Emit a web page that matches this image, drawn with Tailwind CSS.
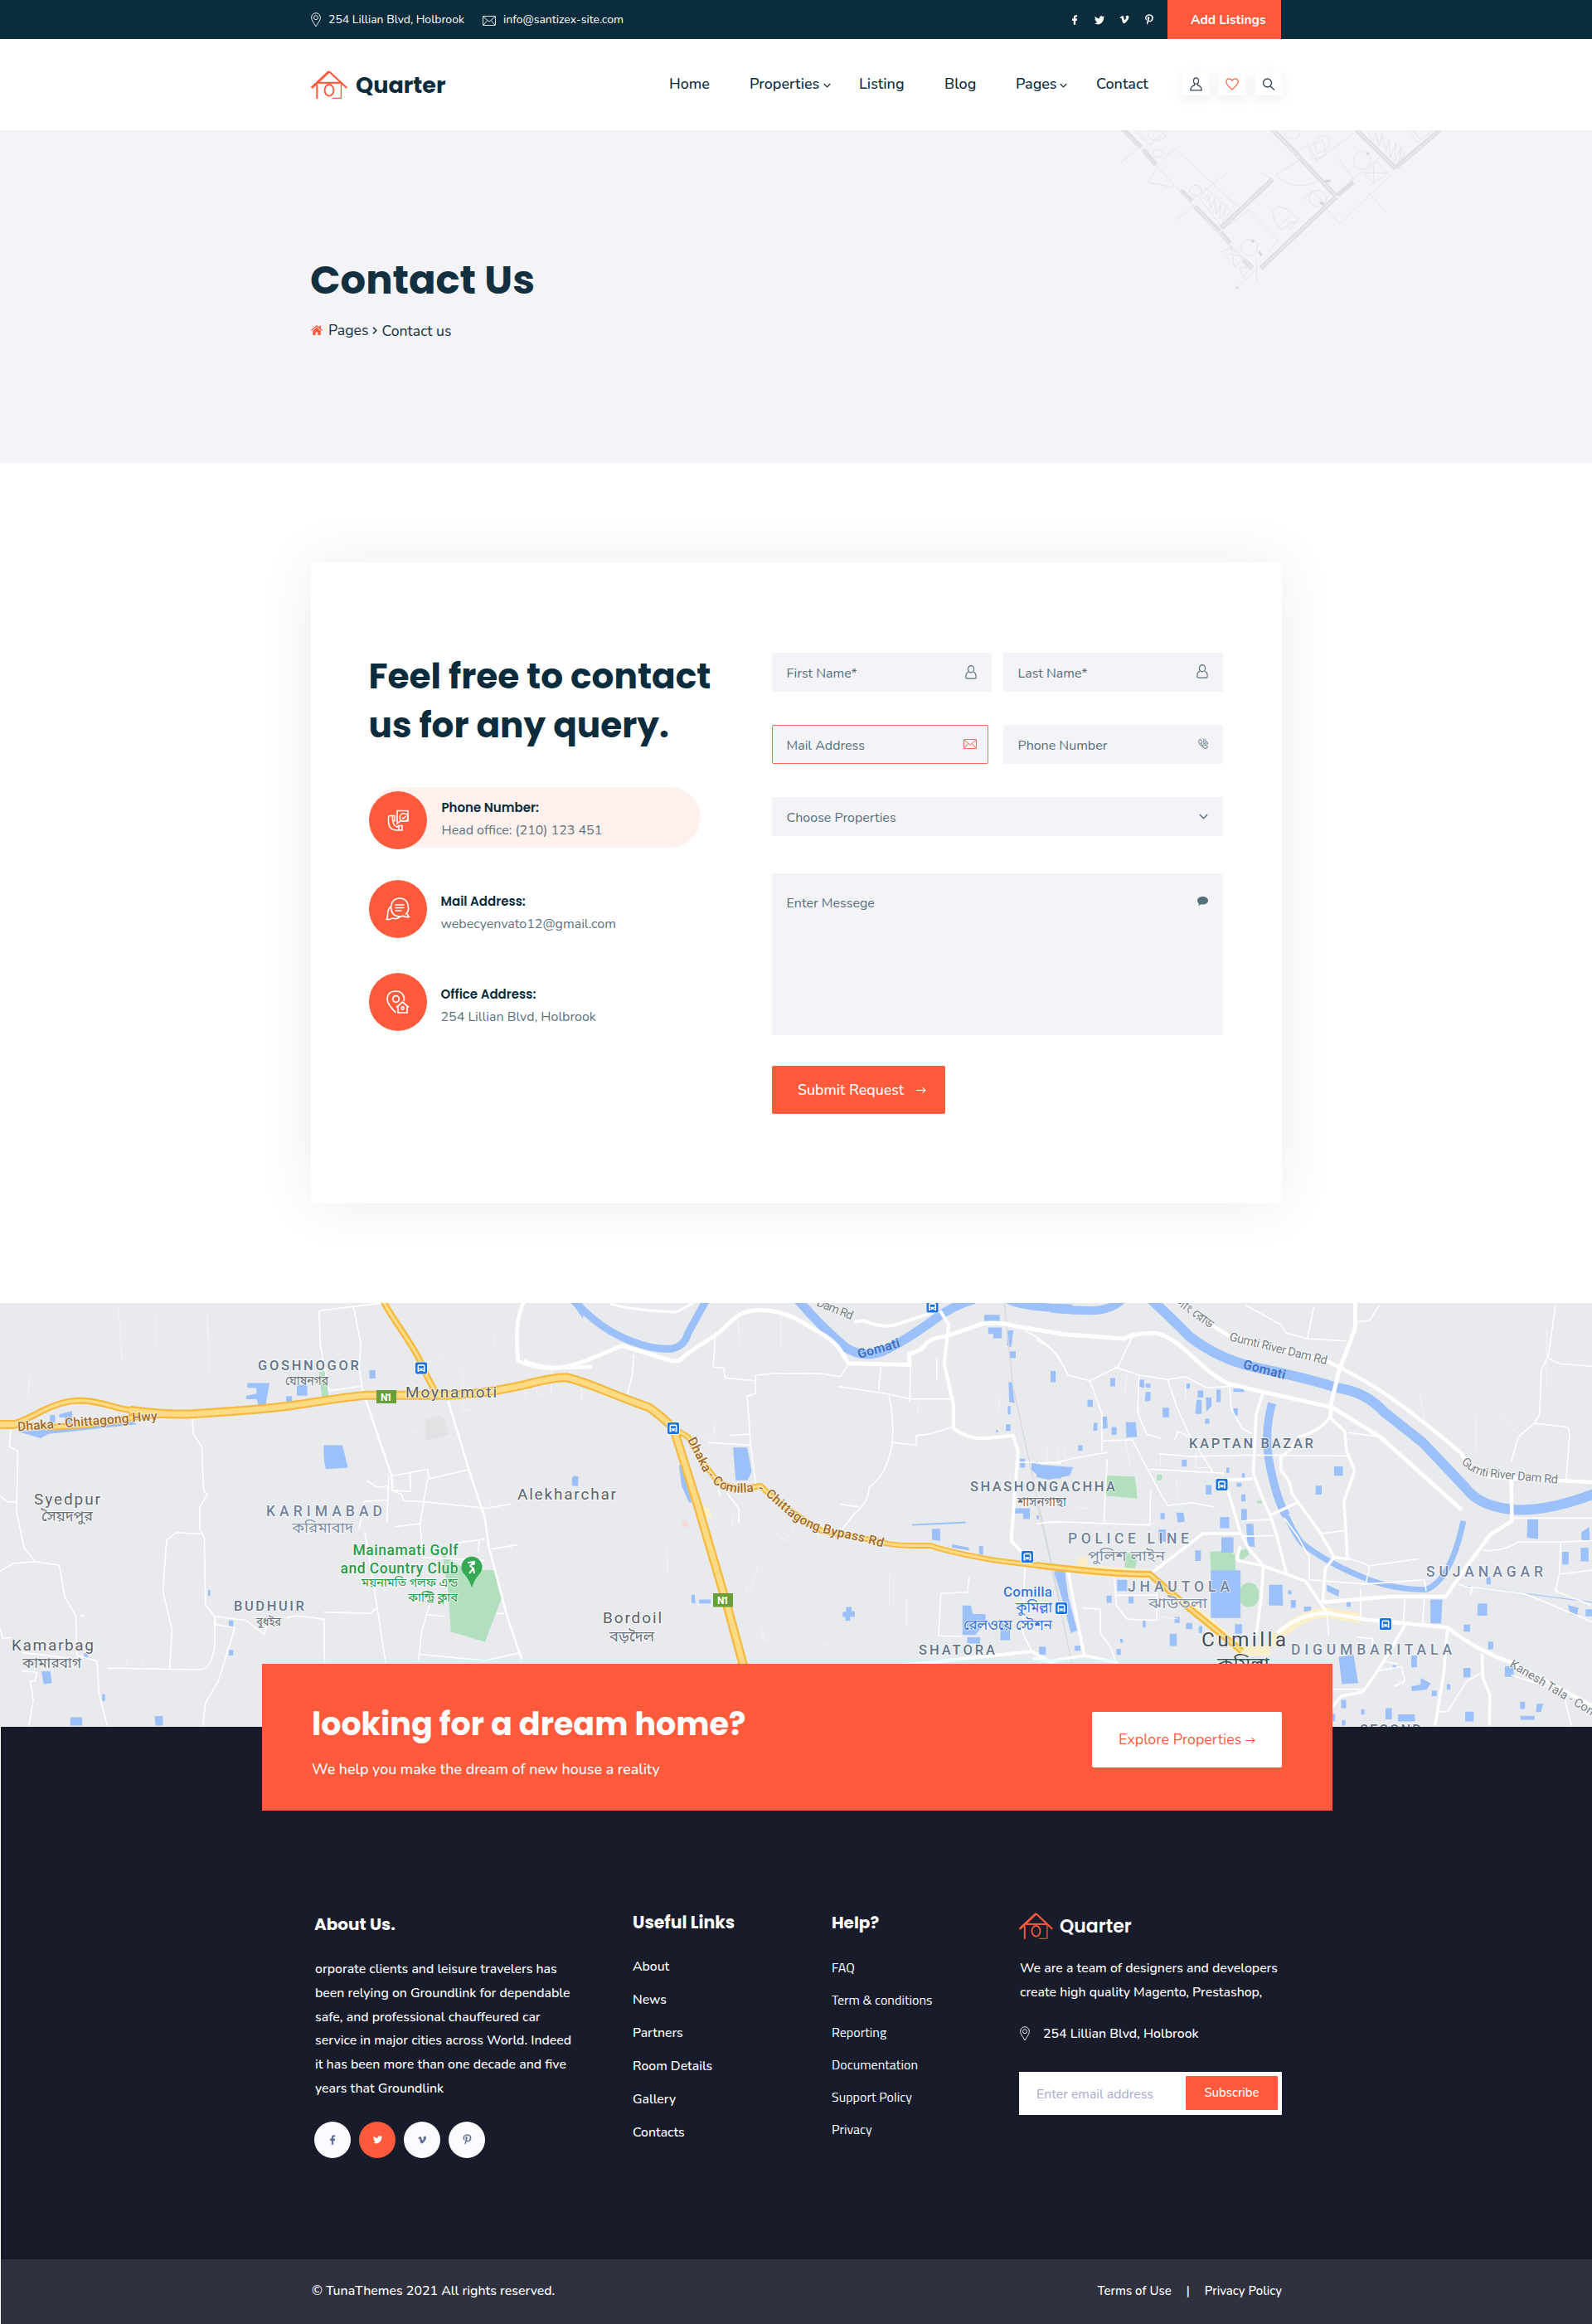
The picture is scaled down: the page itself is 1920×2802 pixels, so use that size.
<!DOCTYPE html>
<html lang="en">
<head>
<meta charset="utf-8">
<title>Quarter - Contact Us</title>
<script src="https://cdn.jsdelivr.net/npm/@tailwindcss/browser@4"></script>
</head>
<body class="w-[1920px] bg-white font-['Nunito','Noto_Sans',sans-serif] text-[#12303f] overflow-x-hidden">

<!-- Shared icons -->
<svg class="hidden">
  <symbol id="fb" viewBox="0 0 24 24"><path d="M14 13.5h2.5l1-4H14v-2c0-1.03 0-2 2-2h1.5V2.14c-.33-.04-1.56-.14-2.86-.14C11.93 2 10 3.66 10 6.7v2.8H7v4h3V22h4z"/></symbol>
  <symbol id="tw" viewBox="0 0 24 24"><path d="M22.46 6c-.77.35-1.6.58-2.46.69a4.3 4.3 0 0 0 1.88-2.38c-.83.5-1.75.85-2.72 1.05a4.28 4.28 0 0 0-7.3 3.91A12.13 12.13 0 0 1 3.06 4.79a4.28 4.28 0 0 0 1.33 5.71c-.71 0-1.37-.2-1.95-.5v.03a4.28 4.28 0 0 0 3.43 4.19 4.3 4.3 0 0 1-1.93.07 4.28 4.28 0 0 0 4 2.98A8.6 8.6 0 0 1 1.75 19.1a12.1 12.1 0 0 0 6.56 1.92c7.88 0 12.2-6.54 12.2-12.2l-.01-.56A8.7 8.7 0 0 0 22.46 6z"/></symbol>
  <symbol id="vm" viewBox="0 0 24 24"><path d="M22 7.42c-.09 1.95-1.45 4.62-4.08 8.02C15.2 19 12.9 20.76 11.02 20.76c-1.17 0-2.15-1.08-2.96-3.23l-1.61-5.93C5.85 9.45 5.2 8.37 4.52 8.37c-.15 0-.68.32-1.57.94L2 8.1C4.96 5.5 6.63 4 7.66 3.9c1.58-.15 2.55.93 2.91 3.24.67 4.24 1.1 6.04 2.06 6.04.62 0 1.55-.98 2.79-2.94 1.16-1.8 1.25-3.3.17-3.3-.4 0-.83.1-1.26.28.86-2.8 2.5-4.17 4.92-4.1 1.8.06 2.84 1.4 2.75 4.3z"/></symbol>
  <symbol id="pt" viewBox="0 0 384 512"><path d="M204 6.5C101.4 6.5 0 74.9 0 185.6 0 256 39.6 296 63.6 296c9.9 0 15.6-27.6 15.6-35.4 0-9.3-23.7-29.1-23.7-67.8 0-80.4 61.2-137.4 140.4-137.4 68.1 0 118.5 38.7 118.5 109.8 0 53.1-21.3 152.7-90.3 152.7-24.9 0-46.2-18-46.2-43.8 0-37.8 26.4-74.4 26.4-113.4 0-66.2-93.9-54.2-93.9 25.8 0 16.8 2.1 35.4 9.6 50.7-13.8 59.4-42 147.9-42 209.1 0 18.9 2.7 37.5 4.5 56.4 3.4 3.8 1.7 3.4 6.9 1.5 50.4-69 48.6-82.5 71.4-172.8 12.3 23.4 44.1 36 69.3 36 106.2 0 153.9-103.5 153.9-196.8C384 71.3 298.2 6.5 204 6.5z"/></symbol>
  <symbol id="house" viewBox="0 0 44 35"><g fill="none" stroke="#ff5a3c" stroke-width="1.9"><path d="M.8 22 22 2.200" stroke-width="3"/><path d="M22 2.200 43.200 22" stroke-width="2.200"/><path d="M9 15.800h27" stroke-width="2.200"/><path d="M7.300 18v17" stroke-width="2"/><path d="M36.400 16v18.400M26 34.400h10.400" stroke-width="1.300"/><ellipse cx="22" cy="24.800" rx="5.400" ry="6.800"/></g></symbol>
  <symbol id="pin" viewBox="0 0 12 18"><g fill="none" stroke="currentColor" stroke-width=".9"><path d="M6 17C3.5 12.5.6 9.500.6 6.100a5.400 5.400 0 0 1 10.800 0C11.400 9.500 8.500 12.500 6 17z"/><circle cx="6" cy="6.200" r="2.500"/></g></symbol>
  <symbol id="mail" viewBox="0 0 16 12"><g fill="none" stroke="currentColor" stroke-width=".9"><rect x=".5" y=".5" width="15" height="11" rx=".6"/><path d="M.8 1 8 7.200 15.200 1M1 11.200 5.800 5.500M15 11.200 10.200 5.500"/></g></symbol>
  <symbol id="user" viewBox="0 0 14 17"><g fill="none" stroke="currentColor" stroke-width="1.200"><ellipse cx="7" cy="4.800" rx="3.600" ry="4.100"/><path d="M4.200 8C1.800 8.800.8 10.500.8 14.200q0 2 1.600 2h9.200q1.600 0 1.600-2c0-3.700-1-5.400-3.400-6.200"/></g></symbol>
  <symbol id="bus" viewBox="-8 -8 16 16"><rect x="-8" y="-8" width="16" height="16" rx="2" fill="#fff" opacity=".7"/><rect x="-7" y="-7" width="14" height="14" rx="1.800" fill="#1a73e8"/><path d="M-4.500 4.500V-2.500q0-2 2-2h5q2 0 2 2v7h-2v-1.300h-5v1.300z" fill="#fff"/><path d="M-3-2.700h6v3h-6zM-3 1.300h1.500v1.200h-1.500zM1.500 1.300h1.500v1.200h-1.500z" fill="#1a73e8"/></symbol>
  <symbol id="arrow" viewBox="0 0 12 8"><path d="M0 4h11M7.500.8 11 4 7.500 7.200" fill="none" stroke="currentColor" stroke-width="1.100"/></symbol>
  <symbol id="chev" viewBox="0 0 10 6"><path d="M.8.800 5 5 9.200.800" fill="none" stroke="currentColor" stroke-width="1.300"/></symbol>
</svg>

<!-- Top bar -->
<div class="h-[47px] bg-[#0b2c3d] text-white">
  <div class="ml-[375px] w-[1170px] h-full flex items-center text-[14px]">
    <svg class="w-3 h-[18px]"><use href="#pin"/></svg>
    <span class="ml-[9px] w-[186px]">254 Lillian Blvd, Holbrook</span>
    <svg class="w-4 h-3 mt-[2px]"><use href="#mail"/></svg>
    <span class="ml-[9px]">info@santizex-site.com</span>
    <div class="ml-auto flex items-center gap-[16px] mr-[15px] fill-white">
      <svg class="w-[14px] h-[14px]"><use href="#fb"/></svg>
      <svg class="w-[14px] h-[14px]"><use href="#tw"/></svg>
      <svg class="w-[14px] h-[13px]"><use href="#vm"/></svg>
      <svg class="w-[14px] h-[13px]"><use href="#pt"/></svg>
    </div>
    <a class="h-full w-[137px] bg-[#ff5a3c] flex items-center pl-7 text-[15.5px] font-bold">Add Listings</a>
  </div>
</div>

<!-- Main navigation -->
<header class="h-[110px] bg-white">
  <div class="ml-[375px] w-[1171px] h-[108px] flex items-center">
    <a class="flex items-center w-[433px]">
      <svg class="w-[44px] h-[35px]"><use href="#house"/></svg>
      <span class="ml-[10px] pt-1 font-['Poppins'] font-bold text-[27px] leading-[36px] text-[#0b2c3d]">Quarter</span>
    </a>
    <nav class="flex text-[18px] font-medium leading-6 text-[#0b2c3d]">
      <a class="w-[97px]">Home</a>
      <a class="w-[132px] flex items-center">Properties<svg class="ml-[5px] mt-[3px] w-[9px] h-[6px]"><use href="#chev"/></svg></a>
      <a class="w-[103px]">Listing</a>
      <a class="w-[86px]">Blog</a>
      <a class="w-[97px] flex items-center">Pages<svg class="ml-[3px] mt-[3px] w-[9px] h-[6px]"><use href="#chev"/></svg></a>
      <a class="w-[104px]">Contact</a>
    </nav>
    <div class="flex gap-3 text-[#3c4a55]">
      <span class="w-8 h-7 flex items-center justify-center shadow-[0_4px_16px_rgba(30,40,80,0.08)]"><svg class="w-[15px] h-[17px]" viewBox="0 0 15 17" fill="none" stroke="currentColor" stroke-width="1.200"><ellipse cx="7.500" cy="4.600" rx="3" ry="3.700"/><path d="M5.500 8v1.800C2.500 10.500 1 12 .8 15.800h13.400C14 12 12.500 10.500 9.500 9.800V8"/></svg></span>
      <span class="w-8 h-7 flex items-center justify-center text-[#ff5a3c] shadow-[0_4px_16px_rgba(30,40,80,0.08)]"><svg class="w-[16px] h-[15px]" viewBox="0 0 16 15" fill="none" stroke="currentColor" stroke-width="1.200"><path d="M8 14C4 10.500.8 7.800.8 4.800.8 2.500 2.400.8 4.400.8 6 .8 7.300 1.700 8 3.200 8.700 1.700 10 .8 11.600.8c2 0 3.600 1.700 3.600 4C15.200 7.800 12 10.500 8 14z"/></svg></span>
      <span class="w-8 h-7 flex items-center justify-center shadow-[0_4px_16px_rgba(30,40,80,0.08)]"><svg class="w-[16px] h-[15px]" viewBox="0 0 16 15" fill="none" stroke="currentColor" stroke-width="1.400"><circle cx="6.500" cy="6" r="5"/><path d="M10 9.800 15 14.400"/></svg></span>
    </div>
  </div>
</header>

<!-- Page title -->
<section class="relative h-[401px] bg-[#f3f3f8] pl-[374px] pt-[150px]">
  <svg class="absolute top-0 left-[1300px] w-[500px] h-[222px]" viewBox="0 51 1500 666" fill="none" stroke="#e4e4ea" stroke-width="3">
    <g stroke="#dfdfe5" stroke-width="17">
      <path d="M160 45 228 112M236 122 282 176M372 268 412 308M422 326 512 416M516 420 550 460M600 520 632 550"/>
      <path d="M518 405 705 228M700 45 800 145M800 148 935 290M1008 50 1150 190M1150 186 1310 50M662 550 850 372 935 292M940 286 996 238"/>
    </g>
    <g stroke="#f3f3f8" stroke-width="3">
      <path d="M160 45 632 550M518 405 705 228M700 45 935 290M1008 50 1150 190 1310 50M662 550 935 292"/>
    </g>
    <path d="M160 45 600 520M205 50 262 104 322 50M152 172 218 116M255 240 290 180M255 240 345 258M300 160 352 118 575 325M540 206 400 310M350 380 415 325M525 410 625 335M610 335 725 450M725 450 690 490M545 470 605 520M520 492 560 470 600 510 570 545zM535 498 585 505M555 475 565 540M575 620 640 560M646 520V600M585 550 625 545 600 585z"/>
    <path d="M715 212 800 160M665 205 700 228M715 215Q790 275 865 235M790 130 830 105 870 165M1095 145 985 235M940 150 995 225M860 165 1000 60M1035 205 1080 165 1120 205 1070 245zM1040 205 1112 205M1070 180V240M900 335 945 390 1130 215M1050 275 1112 345M1195 50 1230 95 1285 50M1210 50 1240 85M810 305 850 270 905 330M925 290 885 250"/>
    <path d="M440 295 465 262 560 350 515 395zM450 300 470 285M465 310 475 290 480 335 495 300 500 355 515 320 515 370 535 335 525 380 548 350M1050 60 1070 90 1078 60 1090 110 1100 65 1115 130 1125 85 1130 150 1150 100 1145 165 1170 110 1160 175 1185 130"/>
    <path d="M845 105Q870 65 905 72Q920 105 890 145L850 155 838 125zM855 100 885 85 895 125 865 135z"/>
    <path d="M705 345Q720 315 760 340L800 375 735 410Q705 380 705 345zM740 385 765 365M760 380 790 385 765 410z"/>
    <ellipse cx="868" cy="298" rx="32" ry="30"/><ellipse cx="620" cy="475" rx="30" ry="30"/><circle cx="1028" cy="160" r="32"/><ellipse cx="425" cy="268" rx="22" ry="18"/><ellipse cx="285" cy="70" rx="32" ry="18"/><ellipse cx="775" cy="65" rx="28" ry="16"/><ellipse cx="290" cy="135" rx="18" ry="14"/>
    <path d="M655 490 665 505M628 455 638 450M895 235 915 235M1045 140 1052 132M875 312 890 320" stroke="#d6d6dc" stroke-width="9"/>
    <circle cx="575" cy="621" r="4" fill="#d6d6dc"/>
  </svg>
  <h1 class="pt-px font-['Poppins'] font-bold text-[48px] leading-[60px] text-[#12303f]">Contact Us</h1>
  <div class="mt-[15px] flex items-center text-[17.7px] leading-7">
    <svg class="w-[14px] h-[12px] ml-px" viewBox="0 0 14 12" fill="#ff5a3c"><path d="M7 0 0 6l.8.9L7 1.700l6.200 5.200.8-.9-2-1.700V.8h-1.800v2z"/><path d="M7 2.800 2.200 6.900V12h3.500V8.500h2.600V12h3.500V6.900z"/></svg>
    <span class="ml-[7px]">Pages</span>
    <svg class="ml-[5px] w-[6px] h-[9px]" viewBox="0 0 6 9"><path d="M1 .8 4.800 4.500 1 8.200" fill="none" stroke="currentColor" stroke-width="1.500"/></svg>
    <span class="ml-[5px] pt-[2px]">Contact us</span>
  </div>
</section>

<!-- Contact card -->
<section class="py-[120px]">
  <div class="ml-[374.5px] w-[1171px] h-[773px] bg-white flex shadow-[0_0_60px_rgba(60,60,130,0.09)]">
    <div class="w-[556.5px] pl-[71px] pt-[108px]">
      <h2 class="-ml-px font-['Poppins'] font-bold text-[42.2px] leading-[59px] text-[#0b2c3d] whitespace-nowrap">Feel free to contact<br>us for any query.</h2>
      <div class="mt-[45px] -ml-px w-[400px] h-[73px] rounded-full bg-[#fff1ed] flex">
        <span class="mt-[5px] w-[70px] h-[70px] shrink-0 rounded-full bg-[#ff5a3c] flex items-center justify-center"><svg class="w-[26px] h-[26px]" viewBox="0 0 26 26" fill="none" stroke="#fff" stroke-width="1.500"><path d="M1.500 9V15Q2 25 12 25h6v-5.500h-4.500l-1 1.500Q7.500 20 7 14.500L9 13.500V7.500H4.500Q1.500 7.500 1.500 9z"/><path d="M6.500 7.500v6.500M14 19.500V25M12 14V1.500h13V14h-9.500L12 17z"/><circle cx="20" cy="9.500" r="4.800"/><path d="M18 9.500l1.500 1.500 3-3"/></svg></span>
        <div class="ml-[18px] mt-[13px]"><p class="font-['Poppins'] font-semibold text-[15px] leading-6 text-[#0b2c3d]">Phone Number:</p><p class="pt-px text-[16px] leading-[29px] text-[#5c727d]">Head office: (210) 123 451</p></div>
      </div>
      <div class="mt-[39px] -ml-px h-[70px] flex">
        <span class="w-[70px] h-[70px] shrink-0 rounded-full bg-[#ff5a3c] flex items-center justify-center"><svg class="w-[30px] h-[28px]" viewBox="0 0 30 28" fill="none" stroke="#fff" stroke-width="1.600" stroke-linejoin="round"><path d="M24 20.500q4-3 3.500-8.500Q26.500 1 17 1T6.500 12q.5 11 10.500 11 2.500 0 4-.8 3.500 2 7.500 1.300-2-1-2-3.500"/><path d="M6.500 11Q2.500 14 2.500 20.500 2.500 25 1 26.500q5 .5 7.500-1.500 5 2 9-1.800M11.500 9h11M11.500 12.500h11M11.500 16h8"/></svg></span>
        <div class="ml-[17px] mt-[14px]"><p class="font-['Poppins'] font-semibold text-[15px] leading-6 text-[#0b2c3d]">Mail Address:</p><p class="pt-px text-[16px] leading-[29px] text-[#5c727d]">webecyenvato12@gmail.com</p></div>
      </div>
      <div class="mt-[42px] -ml-px h-[70px] flex">
        <span class="w-[70px] h-[70px] shrink-0 rounded-full bg-[#ff5a3c] flex items-center justify-center"><svg class="w-[28px] h-[28px]" viewBox="0 0 28 28" fill="none" stroke="#fff" stroke-width="1.700"><path d="M11.500 27Q1 17 1 10.500 1.500 1 11 1t10.500 9l-.5 3"/><circle cx="11.500" cy="10.500" r="3.800"/><path d="M12 20.500 19.500 14l7.500 6.500M14 19.500v7.500h11v-7.500"/><circle cx="19.500" cy="21.500" r="1.600"/></svg></span>
        <div class="ml-[17px] mt-[14px]"><p class="font-['Poppins'] font-semibold text-[15px] leading-6 text-[#0b2c3d]">Office Address:</p><p class="pt-px text-[16px] leading-[29px] text-[#5c727d]">254 Lillian Blvd, Holbrook</p></div>
      </div>
    </div>
    <form class="w-[544px] pt-[109px] text-[16px] text-[#56707b]">
      <div class="flex justify-between">
        <div class="w-[265px] h-[47px] bg-[#f3f3f8] flex items-center justify-between pl-[17.500px] pr-[18px] pt-[3px]">First Name*<svg class="w-[14px] h-[17px] -mt-1"><use href="#user"/></svg></div>
        <div class="w-[265px] h-[47px] bg-[#f3f3f8] flex items-center justify-between pl-[17.500px] pr-[18px] pt-[3px]">Last Name*<svg class="w-[14px] h-[17px] -mt-[5px]"><use href="#user"/></svg></div>
      </div>
      <div class="mt-10 flex justify-between">
        <div class="w-[261px] h-[47px] bg-[#f3f3f8] border border-[#ff6a50] rounded-[2px] flex items-center justify-between pl-[16.500px] pr-[13px] pt-[2px]">Mail Address<svg class="w-4 h-3 -mt-[3px] text-[#ff5a3c]"><use href="#mail"/></svg></div>
        <div class="w-[265px] h-[47px] bg-[#f3f3f8] flex items-center justify-between pl-[17.500px] pr-[18px] pt-[3px]">Phone Number<svg class="w-[12px] h-[12px] -mt-1" viewBox="0 0 24 24" fill="none" stroke="currentColor" stroke-width="2"><path d="M2 3 6 1l4 6-3 3q2 5 7 7l3-3 6 4-2 4q-3 2-8-1Q3 15 1 7 1 4 2 3zM12 1q10 1 11 12M12 5q6 1 7 8M12 9q3 1 3 4"/></svg></div>
      </div>
      <div class="mt-10 h-[47px] bg-[#f3f3f8] flex items-center justify-between pl-[17.500px] pr-[18px] pt-[2px]">Choose Properties<svg class="w-[11px] h-[7px] -mt-[2px]"><use href="#chev"/></svg></div>
      <div class="mt-[45px] h-[195px] bg-[#f3f3f8] flex items-start justify-between pl-[17.500px] pr-[18px] pt-6 leading-6">Enter Messege<svg class="w-[13px] h-[11px] mt-[4px]" viewBox="0 0 13 11" fill="currentColor"><path d="M6.500 0C10 0 13 2 13 4.800S10 9.600 6.500 9.600q-1.300 0-2.300-.3Q3 10.600 1 11q.9-1.200.9-2.600Q0 7 0 4.800C0 2 3 0 6.500 0z"/></svg></div>
      <button type="button" class="mt-[37px] w-[209px] h-[58px] rounded-[2px] bg-[#ff5a3c] text-white text-[17.800px] font-medium flex items-center pl-[31px]">Submit Request<svg class="ml-[15px] w-[12px] h-[9px]"><use href="#arrow"/></svg></button>
    </form>
  </div>
</section>

<!-- Map -->
<section class="h-[511px] bg-[#e8eaed]">
<svg class="block w-[1920px] h-[511px]" viewBox="0 1571 1920 511" stroke-linejoin="round">
  <!-- Western sheet -->
  <g transform="translate(0 1560) scale(.44643 .33801)">
    <path fill="#b2dfbe" d="M1195 930 1260 985 1335 985 1355 1085 1310 1242 1218 1205 1210 1050zM862 280 878 275 888 370 870 375z"/>
    <path fill="#e0e2e4" d="M1148 450 1185 435 1200 445 1212 500 1150 525z"/>
    <path fill="#9cc0f9" d="M875 540h50l15 80-60 5q-8-40-5-85zM668 318h60l-10 78-20 0-5-20-28 0 0-12 28-8 0-20-25-2zM802 325h28v38h-28zM773 365h16v22h-16zM998 272h16v30h-16zM1545 33h30v55zM50 492 360 455 370 465 130 500 110 515zM135 432h14v28h-14zM160 430l35-12 0 40h-20l0-18h-15zM1548 650h14v35h-16zM112 1346h24l4 42-22 4zM190 1510h32v30h-32zM418 1506h22v34h-20zM562 1056h6v22h-6zM618 1165h12v22h-12zM618 1270h12v20h-12zM227 1282h10v20h-10zM276 1428h8v24h-8zM1203 365h10v35z"/>
    <g fill="none" stroke="#fff">
      <g stroke-width="1.600">
        <path vector-effect="non-scaling-stroke" d="M30 475 25 545 48 560 45 780 65 905 95 955 160 968 175 1080 205 1150 208 1290 262 1310 268 1430 290 1540M95 955 35 962 0 990M0 720 20 742 45 742M520 440 522 500 545 545 550 700 560 715 540 760 540 840 552 870 555 1110 580 1150 583 1180 635 1190M545 855 475 852 450 880 440 1060 465 1200 458 1340M580 1150 580 1260Q570 1340 540 1340L290 1335M635 1190 590 1380 555 1460 548 1540M583 1150 665 1165 715 1215 720 1180M775 1155 800 1148 875 1160 877 1318M60 1345 100 1350 95 1380 82 1380 90 1450 78 1540M0 1190 8 1230 30 1225M60 1280 130 1290 180 1300"/>
        <path vector-effect="non-scaling-stroke" d="M862 60 865 180 885 320 890 345 975 330M862 60 955 45 1035 33M955 45 975 180 970 260 980 350M1058 650 1155 625 1160 660 1270 625M1155 660 1145 740 1135 820 1142 920M1108 640 1110 705 1060 700M1090 738 1150 742 1310 765 1380 750M1050 650 1045 820M970 840 985 740 1050 735M990 665 1020 690 1048 685M1058 700 1085 715 1090 738M1068 830 1135 820M985 850 990 880 1025 1170 1042 1318M1020 1118 1000 1140 875 1135M1140 940 1310 950M1225 890 1310 875M1295 880 1292 920M1328 910 1400 895M1160 1110 1140 1200 1130 1310M1130 1285 1310 1308 1405 1280M1155 1145 1200 1150M215 1150 228 1146M1340 1140 1362 1140"/>
      </g>
      <path stroke-width="2.600" vector-effect="non-scaling-stroke" d="M985 365 1058 650 1060 700M1210 380 1270 640 1310 800 1320 900 1370 1150 1410 1305"/>
      <path stroke-width="4.500" vector-effect="non-scaling-stroke" d="M1415 30C1390 90 1395 180 1400 240Q1440 262 1480 265L1600 260"/>
      <path stroke-width="1" stroke="#f3f4f6" vector-effect="non-scaling-stroke" d="M1250 270 1250 420 1275 410M1215 170 1225 185M1420 330v60M1450 320v40h15M1490 310v40M1190 230 1205 215M1330 140 1340 190M1110 490 1130 500M345 1300 338 1330M385 1310v20M1325 740v30M1380 895v20M320 40 330 250M560 60 565 280M420 80v100M80 280 75 380"/>
    </g>
    <g fill="none">
      <g stroke="#f6b940">
        <path stroke-width="11" vector-effect="non-scaling-stroke" d="M0 466H40M350 415C420 428 470 432 520 428 620 420 700 412 780 400 860 385 920 370 985 362H1180C1260 362 1320 352 1380 335L1436 319"/>
        <path stroke-width="8" vector-effect="non-scaling-stroke" d="M30 466Q70 450 110 420C150 395 180 380 220 380 290 385 300 410 370 418M40 468 150 475Q280 465 360 440L450 430M1035 25C1060 90 1110 170 1135 240 1150 290 1165 320 1180 360"/>
      </g>
      <g stroke="#fddb85">
        <path stroke-width="6.500" vector-effect="non-scaling-stroke" d="M0 466H40M350 415C420 428 470 432 520 428 620 420 700 412 780 400 860 385 920 370 985 362H1180C1260 362 1320 352 1380 335L1436 319"/>
        <path stroke-width="3.500" vector-effect="non-scaling-stroke" d="M30 466Q70 450 110 420C150 395 180 380 220 380 290 385 300 410 370 418M40 468 150 475Q280 465 360 440L450 430M1035 25C1060 90 1110 170 1135 240 1150 290 1165 320 1180 360"/>
      </g>
    </g>
  </g>
  <!-- Central sheet -->
  <g transform="translate(640 1560) scale(.40816 .33801)">
    <g fill="none" stroke="#9cc0f9" stroke-width="10">
      <path stroke-width="9" vector-effect="non-scaling-stroke" d="M120 15Q200 120 280 160 360 202 420 195 455 185 465 140L522 15"/>
      <path stroke-width="11" vector-effect="non-scaling-stroke" d="M785 15Q860 120 930 190 980 232 1040 205 1110 165 1200 85 1250 40 1310 20"/>
      <path vector-effect="non-scaling-stroke" d="M1410 20Q1460 50 1600 52"/>
    </g>
    <path fill="#9cc0f9" d="M598 548h42l13 85-12 32-35 0zM122 655l18-4-4 34-14-2zM1340 75h46v25h-46zM1352 120h40v38h-25v-15h-15zM1408 130h18l-6 60-12-5zM1415 205h18v24h-18zM1412 315h10l8 75-16-5zM1410 400h8v30h-8zM1404 465h14v24h-14zM1375 485h6v8h-6zM1537 275h14v40h-14zM1186 838h24v44l-24-5zM1125 822 1285 812v6L1128 827zM1245 893 1295 905v10L1245 905zM1325 900h12v30h-12zM475 1073h10l2 32-12-2zM498 1090h34v14h-34zM932 1117h16v15h10v20h-14v14h-14v-14h-8v-18h10zM1276 1112h25l5 30h38v30l-30 45h-38zM1290 1225h38v22h-38zM1388 1175h28v60h-28zM1445 588h16v32h-14zM1480 600l20 0 0 18 68 0 0 40-20 0-50-10-18-20zM1430 765l45 0 0 38-20 0 0-20-25 0zM1550 980h30v60l-30-30zM1502 1262h20v24h-20zM438 610h8l30 135-8 0-22-60zM1495 790h6v14h-6z"/>
    <path fill="#f9f0cc" d="M505 760l20 0 12 40-22 4z"/><path fill="#f8d8d8" d="M445 810h16l6 20-14 2z"/>
    <g fill="none" stroke="#d5d8db" stroke-width="1.200"><path vector-effect="non-scaling-stroke" d="M1400 33 1425 330 1568 1120"/></g>
    <g fill="none" stroke="#fff">
      <g stroke-width="5">
        <path vector-effect="non-scaling-stroke" d="M-20 240C60 280 110 265 180 230L270 185 420 240 440 238C480 190 530 165 560 135 600 90 610 60 680 58 760 60 800 100 870 150 920 190 920 220 940 248L1120 253 1118 215Q1160 200 1170 175 1190 155 1225 152L1340 105Q1390 100 1430 115L1570 143"/>
        <path stroke-width="4" vector-effect="non-scaling-stroke" d="M1210 60 1235 110 1222 250 1250 400 1250 480Q1290 520 1350 515L1425 505 1440 560 1420 880 1450 920M955 100 985 95Q1040 125 1080 110L1190 65M1100 1325 1370 1290 1480 1275 1545 1320"/>
        <path stroke-width="3" vector-effect="non-scaling-stroke" d="M235 35Q300 60 430 65L480 33"/>
      </g>
      <g stroke-width="1.600">
        <path vector-effect="non-scaling-stroke" d="M305 215 300 290 285 360M545 150 540 260 570 265 575 300 665 310M668 290Q730 280 860 285L915 295 940 250M665 290 665 355 640 365 650 540 665 680M910 330 1060 358 1120 375 1245 375M1035 260 1028 345M1122 255 1120 385M1058 358Q1075 450 1068 540 1050 650 1000 690 1000 740 960 780L920 840M1068 530 1140 540 1140 505 1180 500 1245 475M1200 230v75M915 750 970 760M525 530 650 540M590 505 645 500M580 710 615 765 615 820M555 700 560 720M1212 1068 1205 1220 1275 1222M1212 1068 1290 1065 1295 1010M1460 960 1455 1210 1480 1275M1460 130Q1540 180 1568 245M1440 600 1568 605M1520 815H1568"/>
      </g>
      <path stroke-width="1" stroke="#f5f6f8" vector-effect="non-scaling-stroke" d="M290 220 308 230M545 455 540 500 515 520M60 270v80M150 290v90M200 310 205 345M240 330v45M670 980 650 1050 632 1045 645 1065M680 1190 690 1240 715 1225M850 830v50M785 810 755 880 720 855M1385 365 1382 430M1145 385v40M595 790v30M860 1250h15M400 900 405 990M610 60 620 200M740 60v140M1060 1000v120M1110 1080v100"/>
    </g>
    <g fill="none">
      <g stroke="#f6b940">
        <path stroke-width="11" vector-effect="non-scaling-stroke" d="M-12 322C50 303 80 298 105 298 160 310 220 350 350 405Q390 440 422 479L490 740 580 1110 632 1340"/>
        <path stroke-width="7" vector-effect="non-scaling-stroke" d="M422 479 465 510Q500 590 540 650 580 710 680 685 740 760 860 845L1040 885Q1060 900 1180 898 1250 925 1370 950L1568 980"/>
      </g>
      <g stroke="#fddb85">
        <path stroke-width="6.500" vector-effect="non-scaling-stroke" d="M-12 322C50 303 80 298 105 298 160 310 220 350 350 405Q390 440 422 479L490 740 580 1110 632 1340"/>
        <path stroke-width="3" vector-effect="non-scaling-stroke" d="M422 479 465 510Q500 590 540 650 580 710 680 685 740 760 860 845L1040 885Q1060 900 1180 898 1250 925 1370 950L1568 980"/>
      </g>
    </g>
  </g>
  <!-- Eastern sheet -->
  <g transform="translate(1250 1560) scale(.4273 .33801)">
    <g fill="none" stroke="#9cc0f9">
      <path stroke-width="10" vector-effect="non-scaling-stroke" d="M40 52Q100 60 160 60 220 55 245 15"/>
      <path stroke-width="12" vector-effect="non-scaling-stroke" d="M320 15Q400 110 430 150 520 240 640 268 760 300 850 335 930 350 980 420L1090 530 1210 690Q1250 760 1350 770 1450 775 1580 710"/>
      <path stroke-width="10" vector-effect="non-scaling-stroke" d="M665 390Q640 500 660 620 680 740 705 790"/>
      <path stroke-width="7" vector-effect="non-scaling-stroke" d="M705 790Q725 850 750 890 820 960 920 1010 1000 1055 1100 1055 1170 1020 1205 810"/>
      <path stroke-width="1" vector-effect="non-scaling-stroke" d="M1200 1040 1568 1100"/>
    </g>
    <path fill="#b2dfbe" d="M195 648 278 652 285 730 193 720zM490 920 540 915 560 930 562 985 492 985zM575 915 595 910 600 930 580 950 570 935zM340 645h14v20h-14zM250 925h22l12 30-10 38h-25zM622 738h14v10h-14z"/>
    <rect x="573" y="1030" width="54" height="87" rx="26" ry="36" fill="#b2dfbe"/>
    <path fill="#9cc0f9" d="M492 986h84v170h-84zM656 1038h38l2 74h-40zM522 868h34v55h-34zM518 796h26v40h-26zM578 768h16v40h-16zM592 820h20l4 82-20-2zM578 715h12v25h-12zM252 458h28l4 52-30 2zM185 438h14l2 40-16 5zM212 475h14v28h-14zM162 460h10v28h-12zM356 406h18v34h-18zM144 378h15v25h-15zM208 300h14v30h-14zM40 275h14v38h-14zM308 350h14v30l-16 4zM288 306h16l0 30-16-6zM308 320h14v14h-14zM423 320h10v18h-10zM455 345h16v25h-16zM452 378h14l0 50-18 0zM478 370h16v30l-14 20zM476 445h12v18h-12zM508 342h12v44h-12zM556 408h12v28h-12zM556 338h30v12h-30zM410 592h14v24h-14zM478 682h16v34h-16zM536 620h8v18h-8zM580 640h8v16h-8zM118 540h12v20h-12zM395 780h20l4 32-20 4zM350 782h12v22h-12zM345 840h20v45l-20-5zM448 915h16v38h-16zM560 1178h20v34h-20zM376 1212h20v44h-20zM228 1020h28v40h-28zM198 1076h14v26h-14zM260 1080h14v24h-14zM300 1165h8v25h-8zM390 1152h14v22h-14zM422 1174h18v22h-18zM458 1185h10v24h-10zM226 1266h12v22h-12zM236 1230h8v14h-8zM840 615h25v34h-25zM788 684h17v32h-17zM820 1038l35 20-3 22-32-20zM718 1092h14v28h-14zM755 1115h20v18h-20zM875 1098h12v18h-12zM710 1058h10v14h-10zM1112 1090h34l-4 85h-30zM1246 1104h26v44h-28zM1386 804h30v70l-32-4zM1538 850l22-18 2 50-24-5zM1484 920h18v45h-18zM1536 906h22v48h-22zM1500 1110l30 10-4 30-20-8zM1550 1125h20v25h-20zM1206 1180h18v25h-18zM1275 1240h14v28h-14zM1270 1010h12v26h-12zM853 1295 895 1288 908 1388 862 1392zM1058 1290h16v42h-16zM1205 1334h20v34h-20zM1322 1328h25v38h-25zM1085 1370l28 20-12 22 0 0-42 5 0-18 25-5zM1158 1392h10v20h-10zM1116 1415h14v20h-14zM1005 1325h10v12h-10zM860 1448h14v30h-14zM985 1478h18v40h-18zM1020 1500h48v25h-48zM1210 1490h24v35h-24zM1365 1455h14v26h-14zM1412 1462h18l-6 30-14 0zM1366 1505h40v14h-40zM916 1482h10v18h-10zM862 1520h10v20h-10zM835 1498h8v26h-8zM50 992h30l10 90 25 118-18 10-22-110zM8 1258h18v28h-18zM108 1255h16v18h-16zM565 674h14v14h-14zM0 600l14 10 90 8-10 30-60 15-34-10z"/>
    <g fill="none" stroke="#fbf0ca" stroke-width="12"><path vector-effect="non-scaling-stroke" d="M660 1250Q740 1140 820 1136L915 1158M130 940 130 985 320 1000M420 1100 580 1275 660 1270"/></g>
    <path stroke="#d5d8db" stroke-width="1.200" fill="none" vector-effect="non-scaling-stroke" d="M0 740 30 900 100 1318"/>
    <g fill="none" stroke="#fff">
      <path stroke-width="5" vector-effect="non-scaling-stroke" d="M60 143 250 160Q270 140 340 140C420 170 450 260 540 320L640 350 835 405 970 510 1200 770M900 30V120Q880 190 855 270L830 400V440"/>
      <path stroke-width="4.500" vector-effect="non-scaling-stroke" d="M480 100 550 155Q700 200 820 240L860 265Q930 310 1000 370 1100 460 1200 570 1230 650 1300 655L1570 672M1340 660 1342 810 1280 860 1210 980 1155 1080 1000 1080 810 1100M680 1210Q740 1140 820 1138L930 1162 1160 1190Q1240 1270 1340 1315L1570 1470"/>
      <path stroke-width="3.500" vector-effect="non-scaling-stroke" d="M828 440Q800 490 740 510 720 560 690 580V630Q720 670 720 710L800 850 840 940 815 980 808 1100M828 440 870 490 875 560 898 630 868 740 878 945 840 940M640 350 620 430 612 640Q640 740 660 790L680 870 706 1000M540 700 575 850 600 910 640 970M565 950 640 970 760 1025 820 1138M320 1000 470 855H575M575 900 565 950M640 970 635 1080 620 1220M1040 1180Q960 1360 920 1420L860 1435 830 1480M1160 1190 1150 1350 1125 1540M1258 1285 1260 1370 1280 1430 1278 1540M90 990 105 1100 135 1290 230 1315M-10 1300 40 1310 135 1290M525 665 610 660M660 790 735 745"/>
      <path stroke-width="1.600" vector-effect="non-scaling-stroke" d="M270 155 230 260 150 310 90 290 60 220Q30 180 0 165M220 260 290 290 370 305 420 295 480 335 545 330M370 305 395 400 430 500 460 560 500 640M290 290 285 420 310 500 350 515M150 310 160 340 185 430 185 560M0 605 60 600 110 585 200 565M185 525 270 520 345 700 370 755 440 745 500 760M0 820 50 812 320 825 322 700M200 590 190 810M390 520 400 490 430 510M545 330 550 410 580 480 610 500M345 570 430 580 610 575 880 578M320 625 530 640M580 810 660 805M580 865 670 862M700 800 740 870 770 940 770 1020M590 40 690 110 705 140 765 160 875 168M783 45 765 160M968 40 940 95 905 100M1465 40 1445 220 1425 270 1420 430 1405 462 1360 510 1340 600M1405 462 1500 475 1505 500 1495 660M1445 230 1480 250 1568 258M880 495 970 510M800 855 870 845M1345 800H1568M1260 915Q1320 920 1360 885L1480 885 1568 880M1480 885 1475 1000 1568 985M1475 1000 1465 1060 1565 1110M1190 1035 1230 1050 1225 1075M1225 1045 1380 1070 1568 1170M880 945Q940 960 940 980L930 1030M940 970 1080 945M770 1020 930 1035 1095 1020 1100 1060M915 1050V1160M820 1140 825 1220M1040 1090 1035 1180M1095 1080 1090 1180M220 1010 225 1110 255 1160 340 1165M130 1120 180 1125 180 1210 210 1260 225 1318M225 1075H340M340 1020V1165M1258 1350 1215 1380 1160 1490 1130 1490M980 1310 1020 1320M960 1345 1030 1330 1040 1380 1010 1400M835 1410H920M1340 1360 1440 1400 1490 1440 1510 1540M945 1290 950 1230 905 1225"/>
      <path stroke-width="1" stroke="#f6f7f9" vector-effect="non-scaling-stroke" d="M255 290 250 350M290 400V440M310 510V480M450 560 450 620 500 620M60 550v40M30 545v50M80 555v35M110 760 140 765M350 570V610M420 300V370M400 740 395 660M250 520 265 620M1080 350 1100 480M1240 430V560M1440 120V330M1300 430 1360 500M760 950 740 920M300 820 340 820M850 1250 850 1290M1050 1400 1020 1380M400 1160 350 1150"/>
    </g>
    <g fill="none">
      <path stroke="#f6b940" stroke-width="8" vector-effect="non-scaling-stroke" d="M0 967Q200 1000 320 1000L430 1120 580 1275"/>
      <path stroke="#fddb85" stroke-width="3.200" vector-effect="non-scaling-stroke" d="M0 967Q200 1000 320 1000L430 1120 580 1275"/>
    </g>
  </g>

  <!-- Transit stops, route shields, landmark -->
  <g>
    <use href="#bus" x="500" y="1641.500" width="16" height="16"/><use href="#bus" x="804" y="1714" width="16" height="16"/><use href="#bus" x="1116.500" y="1567.500" width="16" height="16"/><use href="#bus" x="1231" y="1869" width="16" height="16"/><use href="#bus" x="1465.500" y="1782" width="16" height="16"/><use href="#bus" x="1272" y="1931" width="16" height="16"/><use href="#bus" x="1663" y="1950" width="16" height="16"/>
    <rect x="454" y="1676" width="24" height="16" fill="#689f38"/><rect x="860" y="1921" width="24" height="16.500" fill="#689f38"/>
    <path d="M569 1914Q565 1903 560 1898A12.500 12.500 0 1 1 578 1898Q573 1903 569 1914z" fill="#34a853"/>
    <g stroke="#fff" stroke-width="2" fill="none"><path d="M564 1884l8 -1-5 5 4 3-5 6M571 1891l1 6"/></g><circle cx="571" cy="1885" r="2" fill="#fff"/>
  </g>

  <!-- Labels -->
  <g font-family="Roboto, 'Noto Sans Bengali', sans-serif" font-weight="500" stroke="#fff" stroke-opacity=".7" stroke-width="2" paint-order="stroke" fill="#64768a">
    <g fill="#fff" font-size="12" font-weight="700" stroke="none"><text x="459" y="1688.500" textLength="14">N1</text><text x="865" y="1933.500" textLength="14">N1</text></g>
    <g font-size="16.500">
      <text x="311" y="1652" textLength="122">GOSHNOGOR</text>
      <text x="282" y="1942" textLength="85">BUDHUIR</text>
      <text x="1170" y="1798" textLength="175">SHASHONGACHHA</text>
      <text x="1108" y="1995" textLength="92">SHATORA</text>
      <text x="1434" y="1746" textLength="150">KAPTAN BAZAR</text>
      <text x="1640" y="2091" textLength="74">SECOND</text>
    </g>
    <g font-size="17.500" fill="#74849c">
      <text x="321" y="1828" textLength="140">KARIMABAD</text>
      <text x="1288" y="1861" textLength="146">POLICE LINE</text>
      <text x="1360" y="1919" textLength="123">JHAUTOLA</text>
      <text x="1557" y="1995" textLength="194">DIGUMBARITALA</text>
      <text x="1720" y="1901" textLength="141">SUJANAGAR</text>
    </g>
    <g font-size="19" font-weight="400" fill="#5b6268">
      <text x="489" y="1685" textLength="110">Moynamoti</text>
      <text x="41" y="1813.500" textLength="80">Syedpur</text>
      <text x="14" y="1990" textLength="99">Kamarbag</text>
      <text x="624" y="1808" textLength="119">Alekharchar</text>
      <text x="727" y="1957" textLength="71">Bordoil</text>
    </g>
    <g font-size="18" font-weight="400" fill="#6b7279">
      <text x="50" y="1834" textLength="62" lengthAdjust="spacingAndGlyphs">সৈয়দপুর</text>
      <text x="27" y="2011" textLength="71" lengthAdjust="spacingAndGlyphs">কামারবাগ</text>
      <text x="735" y="1979" textLength="54" lengthAdjust="spacingAndGlyphs">বড়দৈল</text>
      <text x="344" y="1670" font-size="16" textLength="52" lengthAdjust="spacingAndGlyphs">ঘোষনগর</text>
      <text x="309" y="1960" font-size="15" textLength="30" lengthAdjust="spacingAndGlyphs">বুধইর</text>
      <text x="1227" y="1816" font-size="16" textLength="59" lengthAdjust="spacingAndGlyphs">শাসনগাছা</text>
      <g fill="#8290a6">
        <text x="352" y="1848" textLength="74" lengthAdjust="spacingAndGlyphs">করিমাবাদ</text>
        <text x="1312" y="1882" textLength="93" lengthAdjust="spacingAndGlyphs">পুলিশ লাইন</text>
        <text x="1385" y="1939" textLength="71" lengthAdjust="spacingAndGlyphs">ঝাউতলা</text>
      </g>
    </g>
    <g fill="#2b9c4c" text-anchor="end" font-size="17.500">
      <text x="552.500" y="1874.500" textLength="127">Mainamati Golf</text>
      <text x="552.500" y="1896.500" textLength="142">and Country Club</text>
      <g font-size="15" font-weight="400"><text x="552" y="1912.500" textLength="116" lengthAdjust="spacingAndGlyphs">ময়নামতি গলফ এন্ড</text><text x="552" y="1930.500" textLength="60" lengthAdjust="spacingAndGlyphs">কান্ট্রি ক্লাব</text></g>
    </g>
    <g fill="#3474dc" font-size="17">
      <text x="1210" y="1925" textLength="59">Comilla</text>
      <text x="1225" y="1944" font-weight="400" textLength="44" lengthAdjust="spacingAndGlyphs">কুমিল্লা</text>
      <text x="1162" y="1965" font-weight="400" textLength="107" lengthAdjust="spacingAndGlyphs">রেলওয়ে স্টেশন</text>
    </g>
    <g fill="#474d54">
      <text x="1449" y="1985" font-size="24.500" font-weight="400" textLength="102">Cumilla</text>
      <text x="1468" y="2013" font-size="21" font-weight="400" textLength="63" lengthAdjust="spacingAndGlyphs">কুমিল্লা</text>
    </g>
    <g fill="#a0692b" font-size="15.500">
      <text transform="translate(21.500 1725.500) rotate(-4.500)" textLength="169">Dhaka - Chittagong Hwy</text>
      <path id="bypass" d="M829 1736 848 1774Q862 1793 875 1797 890 1802 911 1798 920 1798 930 1809L952 1828Q968 1840 983 1845L1008 1852 1040 1859 1070 1867" fill="none" stroke="none"/>
      <text><textPath href="#bypass" textLength="286">Dhaka - Comilla - Chittagong Bypass Rd</textPath></text>
    </g>
    <g fill="#3b6cbf" stroke="none" font-size="15.500">
      <text transform="translate(1036 1638) rotate(-16)" textLength="52">Gomati</text>
      <text transform="translate(1498.500 1649.500) rotate(15)" textLength="52">Gomati</text>
    </g>
    <g fill="#787e85" font-size="14.500" font-weight="400">
      <text transform="translate(984 1574) rotate(22)" textLength="46">Dam Rd</text>
      <text transform="translate(1482 1616) rotate(14)" textLength="121">Gumti River Dam Rd</text>
      <path id="dam" d="M1762 1763Q1776 1779 1797 1781L1848 1786 1890 1790" fill="none" stroke="none"/>
      <text><textPath href="#dam" textLength="122">Gumti River Dam Rd</textPath></text>
      <text transform="translate(1820 2009) rotate(31)">Kanesh Tala - Comilla</text>
      <text transform="translate(1418 1572) rotate(36)">গাং রোড</text>
    </g>
  </g>
</svg>
</section>

<!-- Footer -->
<footer class="flow-root ml-px h-[642px] bg-[#171b2a] text-white">
  <div class="relative -mt-[76px] ml-[315px] w-[1291px] h-[177px] bg-[#ff5a3c] flex justify-between pl-[60px] pr-[61px]">
    <div class="pt-[49px]">
      <h2 class="font-['Poppins'] font-bold text-[38px] leading-[48px]">looking for a dream home?</h2>
      <p class="mt-[16px] text-[17.850px] leading-7 font-medium">We help you make the dream of new house a reality</p>
    </div>
    <a class="mt-[58px] w-[229px] h-[67px] bg-white rounded-[2px] text-[#ff5a3c] text-[17.850px] flex items-center pl-8">Explore Properties<svg class="ml-[5px] mt-[2px] w-[12px] h-[9px]"><use href="#arrow"/></svg></a>
  </div>

  <div class="ml-[378px] flex">
    <div class="w-[384px] pt-[122px]">
      <h3 class="font-['Poppins'] font-bold text-[20px] leading-[30px]">About Us.</h3>
      <p class="mt-[25px] ml-px text-[15.9px] leading-[28.750px] font-medium whitespace-nowrap">orporate clients and leisure travelers has<br>been relying on Groundlink for dependable<br>safe, and professional chauffeured car<br>service in major cities across World. Indeed<br>it has been more than one decade and five<br>years that Groundlink</p>
      <div class="mt-[25px] flex gap-[10px] fill-[#5f6f8f]">
        <a class="w-11 h-11 rounded-full bg-[#fafaff] flex items-center justify-center"><svg class="w-[14px] h-[14px]"><use href="#fb"/></svg></a>
        <a class="w-11 h-11 rounded-full bg-[#ff5a3c] flex items-center justify-center fill-white"><svg class="w-[13px] h-[13px]"><use href="#tw"/></svg></a>
        <a class="w-11 h-11 rounded-full bg-[#fafaff] flex items-center justify-center"><svg class="w-[12px] h-[12px]"><use href="#vm"/></svg></a>
        <a class="w-11 h-11 rounded-full bg-[#fafaff] flex items-center justify-center"><svg class="w-[11px] h-[13px]"><use href="#pt"/></svg></a>
      </div>
    </div>
    <div class="w-[240px] pt-[120px]">
      <h3 class="font-['Poppins'] font-bold text-[20.400px] leading-[30px]">Useful Links</h3>
      <ul class="mt-[18px] text-[15.8px] leading-10 font-medium"><li>About</li><li>News</li><li>Partners</li><li>Room Details</li><li>Gallery</li><li>Contacts</li></ul>
    </div>
    <div class="w-[226px] pt-[120px]">
      <h3 class="font-['Poppins'] font-bold text-[20px] leading-[30px]">Help?</h3>
      <ul class="mt-[20px] font-['Titillium_Web'] text-[16px] leading-[39px]"><li>FAQ</li><li>Term &amp; conditions</li><li>Reporting</li><li>Documentation</li><li>Support Policy</li><li>Privacy</li></ul>
    </div>
    <div class="w-[318px] pt-[122px]">
      <div class="h-8 flex items-center"><svg class="w-[41px] h-[33px]"><use href="#house"/></svg><span class="ml-[8px] pt-[3px] font-['Poppins'] font-semibold text-[22px] leading-7">Quarter</span></div>
      <p class="mt-[22px] ml-px text-[15.880px] leading-[28.750px] font-medium whitespace-nowrap">We are a team of designers and developers<br>create high quality Magento, Prestashop,</p>
      <div class="mt-[21px] ml-px flex items-center text-[15.900px] font-medium leading-7"><svg class="w-3 h-[18px]"><use href="#pin"/></svg><span class="ml-[16px]">254 Lillian Blvd, Holbrook</span></div>
      <div class="mt-[32px] w-[317px] h-[52px] bg-white pl-[21px] pr-[5px] flex items-center justify-between"><span class="pt-1 text-[15.860px] text-[#a9aacb]">Enter email address</span><a class="w-[111px] h-[41px] bg-[#ff5a3c] rounded-[1px] flex items-center justify-center text-[14.900px] font-medium">Subscribe</a></div>
    </div>
  </div>
</footer>
<div class="ml-px h-[78px] bg-[#2f313f] text-white font-medium">
  <div class="ml-[375px] w-[1170px] h-[77px] flex items-center justify-between"><span class="text-[15.900px]">© TunaThemes 2021 All rights reserved.</span><span class="text-[15px]">Terms of Use<span class="mx-[18px]">|</span>Privacy Policy</span></div>
</div>
</body>
</html>
